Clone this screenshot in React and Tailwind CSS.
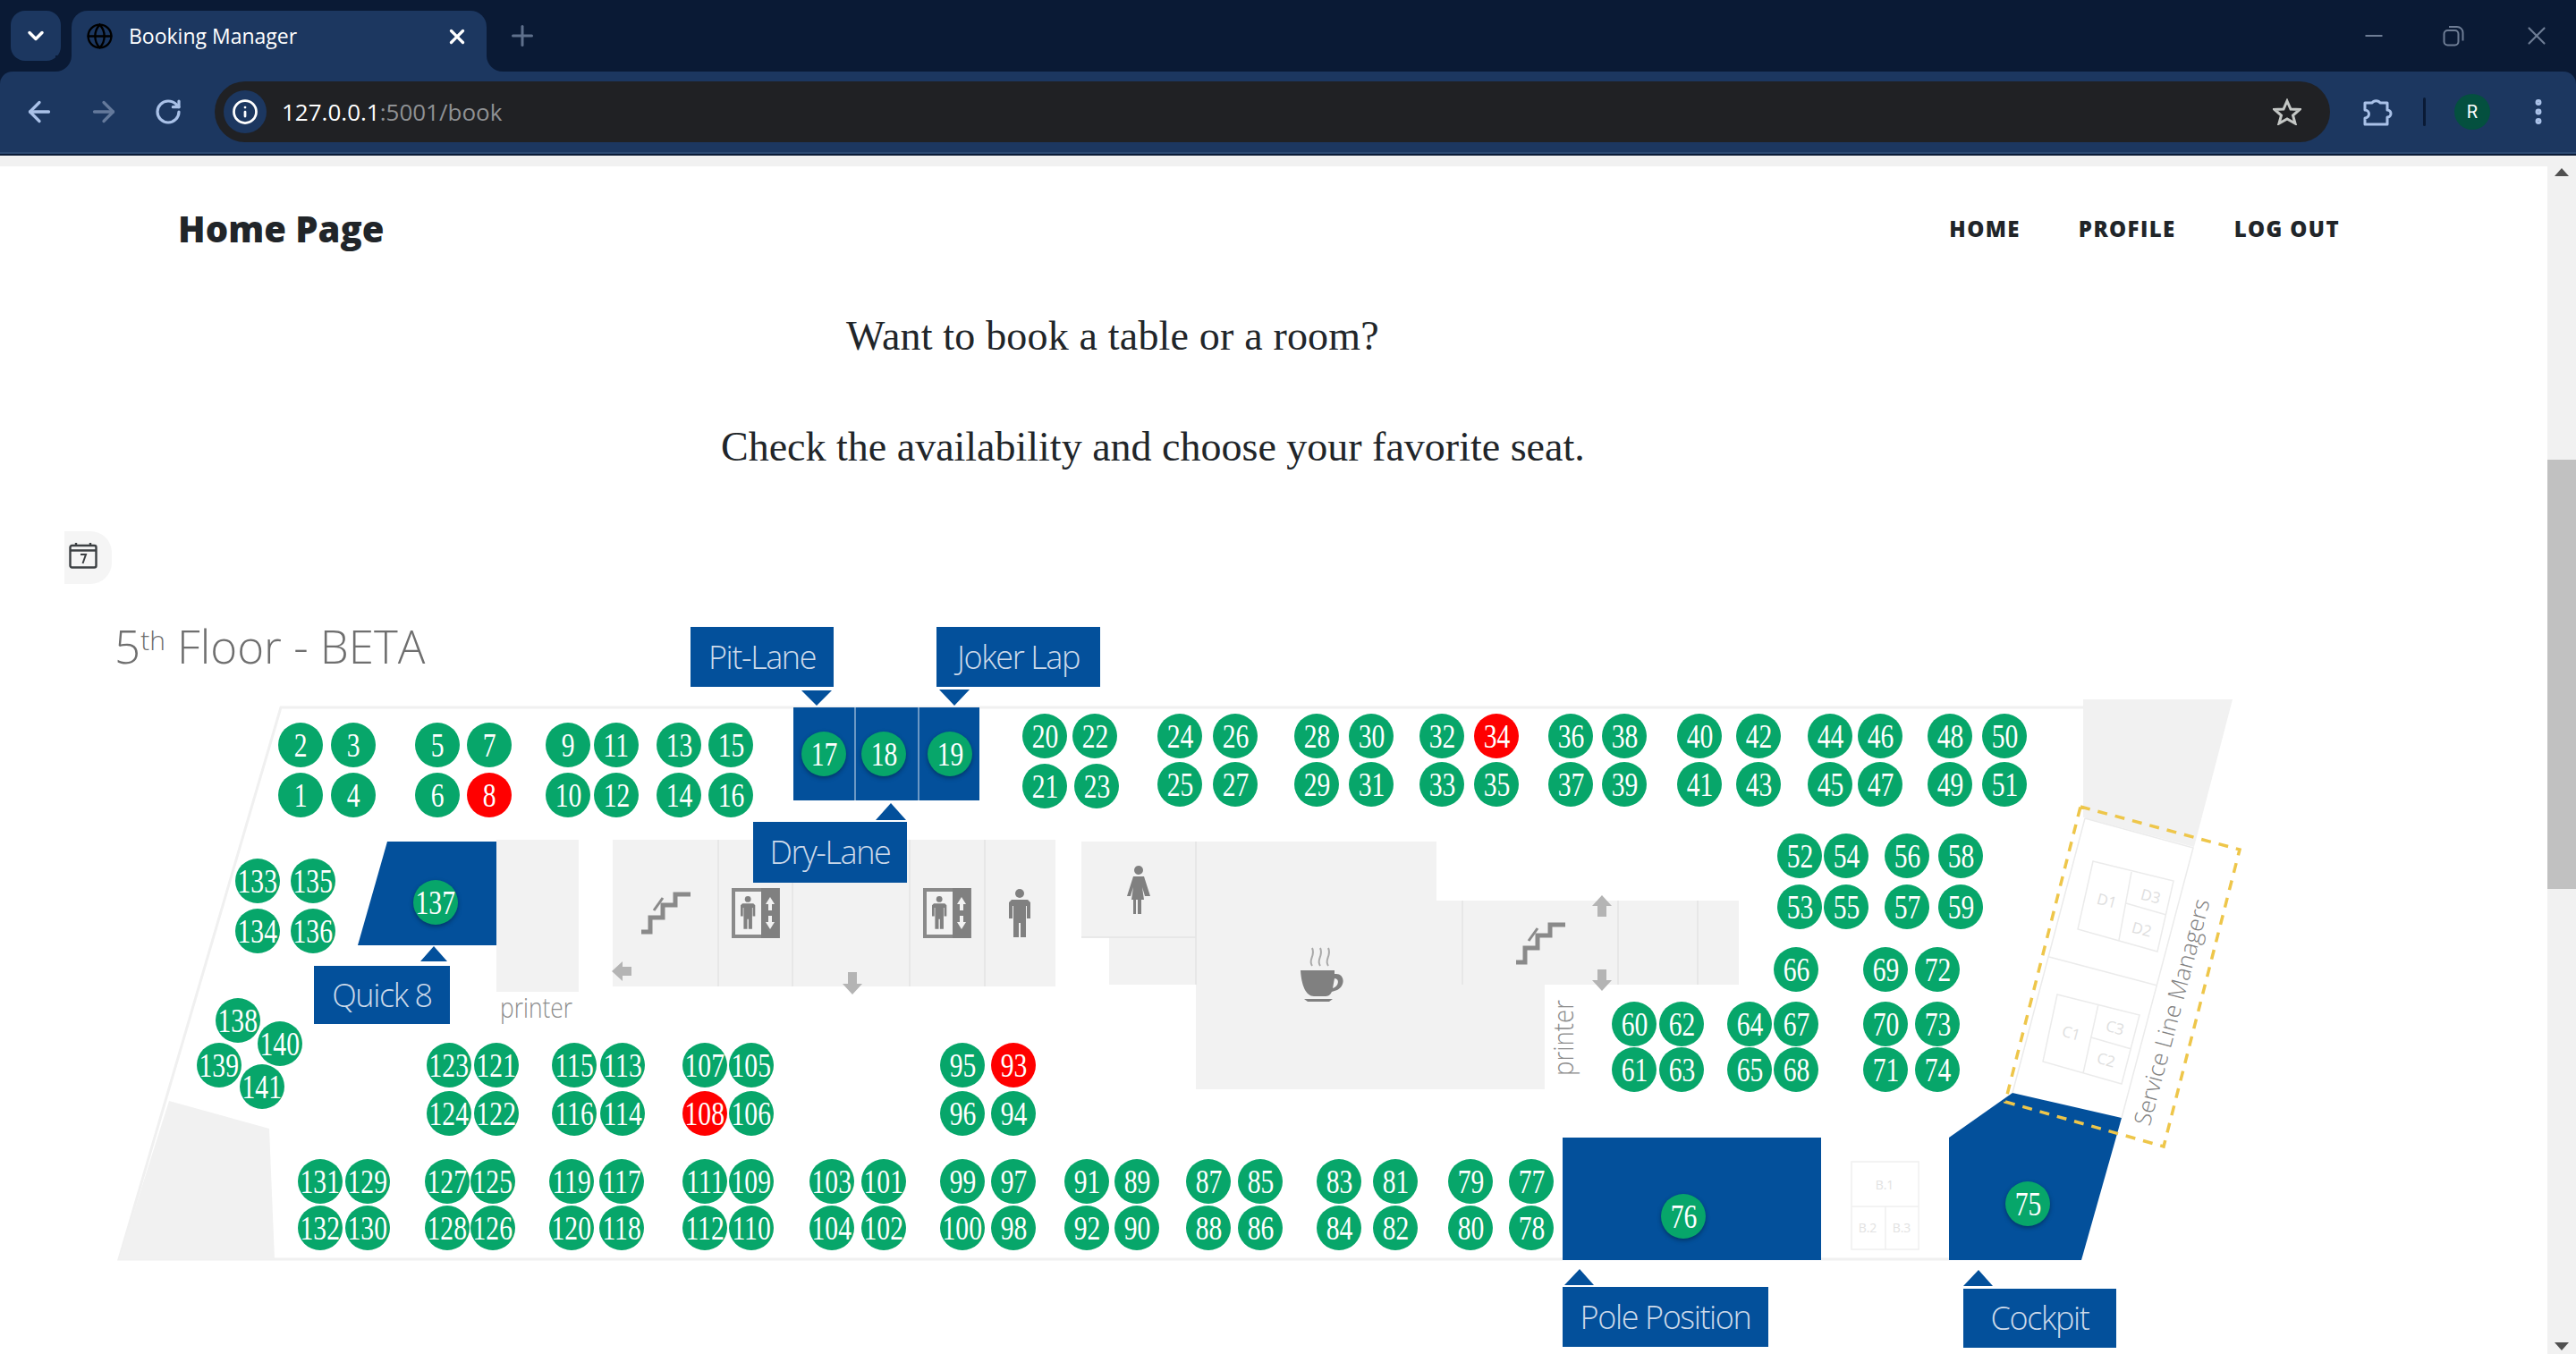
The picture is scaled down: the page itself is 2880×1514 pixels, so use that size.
import {
  ArrowLeft,
  ArrowRight,
  ChevronDown,
  EllipsisVertical,
  Globe,
  Info,
  Minus,
  Plus,
  RotateCw,
  X,
} from 'lucide-react';

// plan coordinates are page pixels, the plan box starts at y = 680
const PLAN_TOP = 680;

const column = (top, bottom, x, y1, y2) => [
  [top, x, y1],
  [bottom, x, y2],
];

const seats = [
  ...column(2, 1, 336, 833, 889),
  ...column(3, 4, 395, 833, 889),
  ...column(5, 6, 489, 833, 889),
  ...column(7, 8, 547, 833, 889),
  ...column(9, 10, 635, 833, 889),
  ...column(11, 12, 689, 833, 889),
  ...column(13, 14, 759, 833, 889),
  ...column(15, 16, 817, 833, 889),
  [17, 921, 843],
  [18, 988, 843],
  [19, 1062, 843],
  [20, 1168, 823],
  [21, 1168, 879],
  [22, 1224, 823],
  [23, 1226, 879],
  ...column(24, 25, 1319, 823, 877),
  ...column(26, 27, 1381, 823, 877),
  ...column(28, 29, 1472, 823, 877),
  ...column(30, 31, 1533, 823, 877),
  ...column(32, 33, 1612, 823, 877),
  ...column(34, 35, 1673, 823, 877),
  ...column(36, 37, 1756, 823, 877),
  ...column(38, 39, 1816, 823, 877),
  ...column(40, 41, 1900, 823, 877),
  ...column(42, 43, 1966, 823, 877),
  ...column(44, 45, 2046, 823, 877),
  ...column(46, 47, 2102, 823, 877),
  ...column(48, 49, 2180, 823, 877),
  ...column(50, 51, 2241, 823, 877),
  ...column(52, 53, 2012, 957, 1014),
  ...column(54, 55, 2064, 957, 1014),
  ...column(56, 57, 2132, 957, 1014),
  ...column(58, 59, 2192, 957, 1014),
  [66, 2008, 1084],
  [69, 2108, 1084],
  [72, 2166, 1084],
  ...column(60, 61, 1827, 1145, 1196),
  ...column(62, 63, 1880, 1145, 1196),
  ...column(64, 65, 1956, 1145, 1196),
  ...column(67, 68, 2008, 1145, 1196),
  ...column(70, 71, 2108, 1145, 1196),
  ...column(73, 74, 2166, 1145, 1196),
  [75, 2267, 1346],
  [76, 1882, 1360],
  ...column(77, 78, 1712, 1321, 1373),
  ...column(79, 80, 1644, 1321, 1373),
  ...column(81, 82, 1560, 1321, 1373),
  ...column(83, 84, 1497, 1321, 1373),
  ...column(85, 86, 1409, 1321, 1373),
  ...column(87, 88, 1351, 1321, 1373),
  ...column(89, 90, 1271, 1321, 1373),
  ...column(91, 92, 1215, 1321, 1373),
  ...column(93, 94, 1133, 1191, 1245),
  ...column(95, 96, 1076, 1191, 1245),
  ...column(97, 98, 1133, 1321, 1373),
  ...column(99, 100, 1076, 1321, 1373),
  ...column(101, 102, 988, 1321, 1373),
  ...column(103, 104, 930, 1321, 1373),
  ...column(105, 106, 840, 1191, 1245),
  ...column(107, 108, 788, 1191, 1245),
  ...column(109, 110, 840, 1321, 1373),
  ...column(111, 112, 788, 1321, 1373),
  ...column(113, 114, 696, 1191, 1245),
  ...column(115, 116, 642, 1191, 1245),
  ...column(117, 118, 695, 1321, 1373),
  ...column(119, 120, 639, 1321, 1373),
  ...column(121, 122, 555, 1191, 1245),
  ...column(123, 124, 502, 1191, 1245),
  ...column(125, 126, 551, 1321, 1373),
  ...column(127, 128, 500, 1321, 1373),
  ...column(129, 130, 411, 1321, 1373),
  ...column(131, 132, 358, 1321, 1373),
  ...column(133, 134, 288, 985, 1041),
  ...column(135, 136, 350, 985, 1041),
  [137, 487, 1009],
  [138, 266, 1141],
  [139, 245, 1191],
  [140, 313, 1167],
  [141, 293, 1215],
];

const booked = [8, 34, 93, 108];
const inRoom = [17, 18, 19, 75, 76, 137];

const callouts = [
  { label: 'Pit-Lane', x: 772, y: 701, w: 160, h: 67 },
  { label: 'Joker Lap', x: 1047, y: 701, w: 183, h: 67 },
  { label: 'Dry-Lane', x: 842, y: 919, w: 172, h: 68 },
  { label: 'Quick 8', x: 351, y: 1080, w: 152, h: 65 },
  { label: 'Pole Position', x: 1747, y: 1439, w: 230, h: 67 },
  { label: 'Cockpit', x: 2195, y: 1441, w: 171, h: 66 },
];

const Seat = ({ n, x, y }) => (
  <div
    className={`absolute flex h-[50px] w-[50px] items-center justify-center rounded-full font-['Liberation_Serif',serif] text-[37px] leading-none text-white ${
      booked.includes(n) ? 'bg-[#ff0000]' : 'bg-[#07a66a]'
    } ${inRoom.includes(n) ? 'shadow-[0_2px_5px_rgba(0,0,0,0.35)]' : ''}`}
    style={{ left: x - 25, top: y - 25 - PLAN_TOP }}
  >
    <span className="inline-block scale-x-80">{n}</span>
  </div>
);

const Callout = ({ label, x, y, w, h }) => (
  <div
    className="absolute flex items-center justify-center bg-[#03509b] font-['Open_Sans',sans-serif] text-[36px] font-light leading-none tracking-[-1.4px] text-[#cddaea]"
    style={{ left: x, top: y - PLAN_TOP, width: w, height: h }}
  >
    {label}
  </div>
);

const Stairs = ({ x, y }) => (
  <g transform={`translate(${x} ${y})`} fill="none" stroke="#8a8a8a" strokeWidth="5">
    <path d="M0 44h10V28h14V14h14V2h17" />
    <path d="M14 20l10-14" strokeWidth="3" />
  </g>
);

const Man = ({ x, y, s = 1 }) => (
  <g transform={`translate(${x} ${y}) scale(${s})`} fill="#808080">
    <circle cx="12" cy="5" r="5" />
    <path d="M3 12h18l3 3v18h-4v-14h-1v35h-6V38h-2v16H5V19H4v14H0V15z" />
  </g>
);

const Woman = ({ x, y }) => (
  <g transform={`translate(${x} ${y})`} fill="#808080">
    <circle cx="13" cy="5" r="5" />
    <path d="M7 12h12l7 22h-6v0l-3-10 2 14h-3v16h-4V38h-2v16H7V38H5l2-14-3 10H0z" />
  </g>
);

const Lift = ({ x, y }) => (
  <g transform={`translate(${x} ${y})`}>
    <rect x="2" y="2" width="50" height="52" fill="#f2f2f2" stroke="#8a8a8a" strokeWidth="4" />
    <rect x="33" y="0" width="20" height="56" fill="#808080" />
    <Man x={10} y={9} s={0.68} />
    <path d="M43 10l5 8h-3v7h-4v-7h-3zM43 46l5-8h-3v-7h-4v7h-3z" fill="#f2f2f2" />
  </g>
);

const FloorDrawing = () => (
  <svg className="absolute left-0 top-0 h-[834px] w-[2848px]" viewBox={`0 ${PLAN_TOP} 2848 834`}>
    {/* outer walls */}
    <path d="M2329 791H314L133 1408H1747M2036 1408H2179" fill="none" stroke="#f0f0f0" strokeWidth="3" />
    <path d="M2329 782h167l-43 165-124-33z" fill="#f1f1f1" />
    <path d="M189 1231l112 31 6 146H133z" fill="#f1f1f1" />

    {/* core rooms */}
    <g fill="#f2f2f2">
      <rect x="555" y="939" width="92" height="170" />
      <rect x="685" y="939" width="495" height="164" />
      <rect x="1209" y="941" width="128" height="107" />
      <rect x="1240" y="1048" width="97" height="53" />
      <path d="M1337 941h269v66h338v94h-217v117h-390z" />
    </g>
    <path
      d="M803 939v164M886 939v164M1017 939v164M1101 939v164M1337 941v160M1209 1048h128M1635 1007v94M1809 1007v94M1898 1007v94"
      fill="none"
      stroke="#e4e4e4"
      strokeWidth="1.5"
    />
    <text
      x="559"
      y="1138"
      textLength="81"
      lengthAdjust="spacingAndGlyphs"
      className="font-['Open_Sans',sans-serif] text-[31px] font-light"
      fill="#8c8c8c"
    >
      printer
    </text>
    <text
      transform="translate(1759 1203) rotate(-90)"
      textLength="85"
      lengthAdjust="spacingAndGlyphs"
      className="font-['Open_Sans',sans-serif] text-[31px] font-light"
      fill="#8c8c8c"
    >
      printer
    </text>

    {/* floor icons */}
    <Stairs x={717} y={998} />
    <Stairs x={1695} y={1032} />
    <Lift x={818} y={993} />
    <Lift x={1032} y={993} />
    <Man x={1128} y={994} />
    <Woman x={1260} y={968} />
    <g fill="#808080">
      <path d="M1454 1085h38v4h2c9 0 11 13 1 18l-6 2c-2 4-4 5-8 5h-12c-9 0-14-12-15-29zm38 9-2 11c7-2 8-11 2-11z" />
      <path d="M1458 1117h32l-4 3h-24z" />
    </g>
    <path
      d="M1467 1080c-5-7 4-11 0-20M1476 1080c-5-7 4-11 0-20M1485 1080c-5-7 4-11 0-20"
      fill="none"
      stroke="#a8a8a8"
      strokeWidth="2"
    />
    <g fill="#b4b4b4">
      <path d="M1791 1001l11 12h-6v12h-10v-12h-6zM1791 1108l11-12h-6v-12h-10v12h-6zM953 1112l11-12h-6v-13h-10v13h-6zM684 1086l12-11v6h10v10h-10v6z" />
    </g>

    {/* blue rooms */}
    <g fill="#03509b">
      <rect x="887" y="791" width="208" height="104" />
      <path d="M433 941h122v116H400z" />
      <rect x="1747" y="1272" width="289" height="137" />
      <path d="M2179 1272l71-50 122 28-45 159h-148z" />
      <path d="M896 772h34l-17 17zM1050 771h34l-17 18zM979 917h34l-17-19zM470 1075h30l-15-17zM1749 1437h33l-16-18zM2195 1438h33l-16-18z" />
    </g>
    <path d="M956 791v104M1027 791v104" stroke="#8fb0d3" strokeWidth="1.5" />

    {/* B room */}
    <g fill="none" stroke="#f0f0f0" strokeWidth="1.5">
      <rect x="2070" y="1299" width="75" height="98" />
      <path d="M2070 1349h75M2108 1349v48" />
    </g>
    <g className="font-['Open_Sans',sans-serif] text-[14px]" fill="#e2e2e2" textAnchor="middle">
      <text x="2107" y="1330">B.1</text>
      <text x="2088" y="1378">B.2</text>
      <text x="2126" y="1378">B.3</text>
    </g>

    {/* service line managers */}
    <g fill="none" stroke="#ebebeb" strokeWidth="1.5">
      <path d="M2331 915l121 33-80 302M2331 915l-81 307M2291 1070l121 32" />
      <path d="M2340 963l90 22-18 79-89-25zM2383 975l-14 76M2377 1010l45 13" />
      <path d="M2300 1112l92 23-20 77-88-25zM2346 1123l-17 77M2338 1160l45 13" />
    </g>
    <g className="font-['Open_Sans',sans-serif] text-[17px]" fill="#dedede" textAnchor="middle">
      <text transform="translate(2354 1013) rotate(15)">D1</text>
      <text transform="translate(2403 1008) rotate(15)">D3</text>
      <text transform="translate(2393 1045) rotate(15)">D2</text>
      <text transform="translate(2314 1161) rotate(15)">C1</text>
      <text transform="translate(2363 1155) rotate(15)">C3</text>
      <text transform="translate(2353 1191) rotate(15)">C2</text>
    </g>
    <text
      transform="translate(2437 1134) rotate(-75)"
      className="font-['Open_Sans',sans-serif] text-[26px] font-light"
      fill="#808080"
      textAnchor="middle"
    >
      Service Line Managers
    </text>
    <path
      d="M2326 902l178 48-85 332-177-50z"
      fill="none"
      stroke="#eec64a"
      strokeWidth="3.5"
      strokeDasharray="11 9"
    />
  </svg>
);

const CalendarChip = () => (
  <div className="ml-[72px] flex h-[59px] w-[53px] items-start rounded-r-[24px] bg-[#f5f5f5] pl-[5px] pt-[12px]">
    <svg width="32" height="30" viewBox="0 0 32 30" fill="none" stroke="#3c4043" strokeWidth="2.4">
      <rect x="1.5" y="4" width="29" height="24.5" rx="2" />
      <path d="M1.5 9.5h29M8 1v4M24 1v4" />
      <path d="M13 14h6l-3.5 10" strokeWidth="2" />
    </svg>
  </div>
);

const BrowserChrome = () => (
  <div className="flex h-[174px] flex-col bg-[#0a1a35] font-['Open_Sans',sans-serif]">
    <div className="flex h-[80px] items-start pl-[12px] pt-[12px]">
      <div className="flex h-[56px] w-[56px] items-center justify-center rounded-[16px] bg-[#1c3760]">
        <ChevronDown className="h-7 w-7 text-white" strokeWidth={3} />
      </div>
      <div className="relative ml-[12px] flex h-[68px] w-[464px] items-center rounded-t-[18px] bg-[#1c3760] pb-[12px] pl-[16px]">
        <Globe className="h-[31px] w-[31px] text-black" strokeWidth={1.8} />
        <span className="ml-[17px] text-[23px] leading-none text-white">Booking Manager</span>
        <X className="absolute right-[20px] top-[16px] h-[26px] w-[26px] text-white" strokeWidth={3} />
        <div className="absolute bottom-0 right-[-18px] h-[18px] w-[18px] bg-[#1c3760]">
          <div className="h-full w-full rounded-bl-[18px] bg-[#0a1a35]" />
        </div>
        <div className="absolute bottom-0 left-[-18px] h-[18px] w-[18px] bg-[#1c3760]">
          <div className="h-full w-full rounded-br-[18px] bg-[#0a1a35]" />
        </div>
      </div>
      <Plus className="ml-[22px] mt-[10px] h-[36px] w-[36px] text-[#5f708c]" strokeWidth={2} />
      <div className="ml-auto flex h-[56px] items-center text-[#6e7d95]">
        <Minus className="h-[30px] w-[30px]" strokeWidth={1.6} />
        <svg className="ml-[62px]" width="24" height="24" viewBox="0 0 24 24" fill="none" stroke="currentColor" strokeWidth="2">
          <rect x="1.5" y="6" width="16" height="16.5" rx="4" />
          <path d="M7 2h9a6.5 6.5 0 0 1 6.5 6.500v9" />
        </svg>
        <X className="ml-[64px] mr-[27px] h-[34px] w-[34px]" strokeWidth={1.5} />
      </div>
    </div>
    <div className="flex h-[92px] items-center rounded-t-[14px] border-b-2 border-b-[#2d4a72] bg-[#1c3760]">
      <ArrowLeft className="ml-[26px] h-[36px] w-[36px] text-[#a9c1e8]" strokeWidth={2.2} />
      <ArrowRight className="ml-[36px] h-[36px] w-[36px] text-[#64799b]" strokeWidth={2.2} />
      <RotateCw className="ml-[38px] h-[32px] w-[32px] text-[#a9c1e8]" strokeWidth={2.4} />
      <div className="ml-[36px] flex h-[68px] w-[2365px] items-center rounded-full bg-[#202124] pl-[10px] pr-[32px]">
        <div className="flex h-[48px] w-[48px] items-center justify-center rounded-full bg-[#1c3760]">
          <Info className="h-[30px] w-[30px] text-white" strokeWidth={2.2} />
        </div>
        <span className="ml-[17px] text-[26px] leading-none text-white">
          127.0.0.1<span className="text-[#8f9194]">:5001/book</span>
        </span>
        <svg className="ml-auto" width="32" height="30" viewBox="0 0 32 30" fill="none" stroke="#c4c7c5" strokeWidth="3">
          <polygon points="16,3 20,12 30,12.500 22.500,19 25,28 16,23 7,28 9.500,19 2,12.500 12,12" />
        </svg>
      </div>
      <svg className="ml-[36px]" width="34" height="34" viewBox="0 0 34 34" fill="none" stroke="#a9c1e8" strokeWidth="3" strokeLinejoin="round">
        <path d="M3 7h8a5 4 0 0 1 9 0h8v8a4 4 0 0 1 0 8v8H3v-7a4.500 4.500 0 0 0 0-9z" />
      </svg>
      <div className="ml-[34px] h-[32px] w-[3px] rounded-full bg-[#0a1a35]" />
      <div className="ml-[32px] flex h-[40px] w-[40px] items-center justify-center rounded-full bg-[#04503f] font-['Roboto',sans-serif] text-[20px] text-white">
        R
      </div>
      <EllipsisVertical className="ml-[36px] h-[36px] w-[36px] text-[#a9c1e8]" strokeWidth={2.6} />
    </div>
  </div>
);

const ScrollRail = () => (
  <div className="flex w-[32px] shrink-0 flex-col items-center bg-[#f1f1f1]">
    <div className="mt-[2px] h-0 w-0 border-x-[8px] border-b-[9px] border-x-transparent border-b-[#505050]" />
    <div className="mt-[317px] h-[480px] w-full bg-[#c1c1c1]" />
    <div className="mb-[4px] mt-auto h-0 w-0 border-x-[8px] border-t-[9px] border-x-transparent border-t-[#505050]" />
  </div>
);

export default function App() {
  return (
    <div className="flex h-[1514px] w-[2880px] flex-col overflow-hidden bg-white">
      <BrowserChrome />
      <div className="h-[12px] bg-[#f1f1f1]" />
      <div className="flex min-h-0 flex-1">
        <main className="relative min-w-0 flex-1">
          <nav className="flex h-[140px] items-center justify-between pl-[199px] pr-[232px] font-['Open_Sans',sans-serif] text-[#212529]">
            <span className="text-[40px] font-extrabold leading-none">Home Page</span>
            <div className="flex gap-[65px] text-[24px] font-extrabold leading-none tracking-[1.4px]">
              <span>HOME</span>
              <span>PROFILE</span>
              <span>LOG OUT</span>
            </div>
          </nav>
          <div className="font-['Liberation_Serif',serif] text-[46px] leading-none text-[#212529]">
            <p className="ml-[946px] mt-[27px] tracking-[0.18px]">Want to book a table or a room?</p>
            <p className="ml-[806px] mt-[78px]">Check the availability and choose your favorite seat.</p>
          </div>
          <div className="mt-[71px]">
            <CalendarChip />
          </div>
          <section className="relative mt-[27px] h-[834px]">
            <FloorDrawing />
            <div className="absolute left-[128px] top-[17px] font-['Open_Sans',sans-serif] text-[51px] font-light leading-none text-[#6f6f6f]">
              5<sup className="text-[30px]">th</sup> Floor - BETA
            </div>
            {callouts.map((c) => (
              <Callout key={c.label} {...c} />
            ))}
            {seats.map(([n, x, y]) => (
              <Seat key={n} n={n} x={x} y={y} />
            ))}
          </section>
        </main>
        <ScrollRail />
      </div>
    </div>
  );
}
